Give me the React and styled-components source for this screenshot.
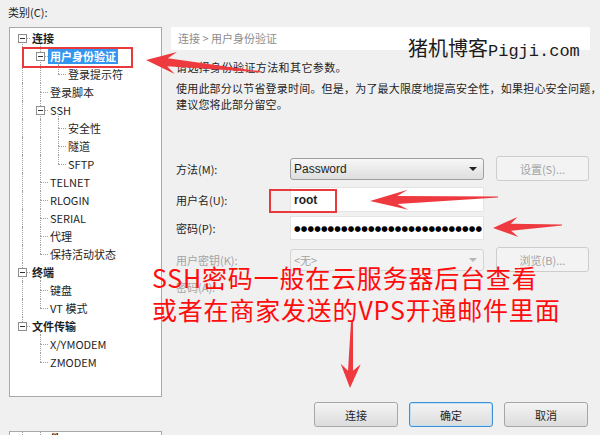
import React from 'react'
import styled, { createGlobalStyle } from 'styled-components'

const GlobalStyle = createGlobalStyle`
  html, body {
    margin: 0;
    padding: 0;
    background: #f0f0f0;
  }
  body {
    font-family: "Noto Sans CJK SC", "Liberation Sans", sans-serif;
    font-size: 11px;
    color: #1e1e1e;
  }
`

const treeRows = [
  { t: '连接', l: 0, box: true, bold: true },
  { t: '用户身份验证', l: 1, box: true, sel: true },
  { t: '登录提示符', l: 2 },
  { t: '登录脚本', l: 1 },
  { t: 'SSH', l: 1, box: true },
  { t: '安全性', l: 2 },
  { t: '隧道', l: 2 },
  { t: 'SFTP', l: 2 },
  { t: 'TELNET', l: 1 },
  { t: 'RLOGIN', l: 1 },
  { t: 'SERIAL', l: 1 },
  { t: '代理', l: 1 },
  { t: '保持活动状态', l: 1 },
  { t: '终端', l: 0, box: true, bold: true },
  { t: '键盘', l: 1 },
  { t: 'VT 模式', l: 1 },
  { t: '文件传输', l: 0, box: true, bold: true },
  { t: 'X/YMODEM', l: 1 },
  { t: 'ZMODEM', l: 1 },
]

// work out which rows still have a sibling further down
const hasNext = treeRows.map((row, i) => {
  for (let j = i + 1; j < treeRows.length; j++) {
    if (treeRows[j].l < row.l) return false
    if (treeRows[j].l === row.l) return true
  }
  return false
})

const treeLines = (() => {
  const stack = []
  return treeRows.map((row, i) => {
    stack[row.l] = i
    const guides = []
    for (let k = 0; k < row.l; k++) {
      if (hasNext[stack[k]]) guides.push(k)
    }
    return { guides, first: i === 0 }
  })
})()

const levelX = (l) => 12 + 18 * l

function hasChildren(i) {
  return i + 1 < treeRows.length && treeRows[i + 1].l > treeRows[i].l
}

const arrow = ([x1, y1], [x2, y2], headLen, headW, shaftW, tailW) => {
  const len = Math.hypot(x2 - x1, y2 - y1)
  const ux = (x2 - x1) / len
  const uy = (y2 - y1) / len
  const nx = -uy
  const ny = ux
  const jx = x2 - ux * headLen * 0.72
  const jy = y2 - uy * headLen * 0.72
  const bx = x2 - ux * headLen
  const by = y2 - uy * headLen
  const p = (x, y) => `${x.toFixed(1)},${y.toFixed(1)}`
  return [
    p(x1 + nx * tailW / 2, y1 + ny * tailW / 2),
    p(jx + nx * shaftW / 2, jy + ny * shaftW / 2),
    p(bx + nx * headW / 2, by + ny * headW / 2),
    p(x2, y2),
    p(bx - nx * headW / 2, by - ny * headW / 2),
    p(jx - nx * shaftW / 2, jy - ny * shaftW / 2),
    p(x1 - nx * tailW / 2, y1 - ny * tailW / 2),
  ].join(' ')
}

const arrows = [
  arrow([262, 72], [146, 60], 30, 22, 8, 1),
  arrow([498, 197], [370, 201], 38, 20, 8, 1),
  arrow([562, 225], [493, 228], 25, 20, 7, 1),
  arrow([352, 322], [350, 388], 24, 20, 5, 2),
]

const dots = Array.from({ length: 28 })

const App = () => {
  return (
    <Page>
      <GlobalStyle />
      <Caption>类别(C):</Caption>
      <Body>
        <LeftCol>
          <TreePanel>
            {treeRows.map((row, i) => {
              const x = levelX(row.l)
              const { guides, first } = treeLines[i]
              return (
                <TreeRow key={row.t} $level={row.l}>
                  {guides.map((k) => (
                    <VGuide key={k} $x={levelX(k)} $top={0} $bottom={0} />
                  ))}
                  {!first && <VGuide $x={x} $top={0} $bottom={9} />}
                  {hasNext[i] && <VGuide $x={x} $top={9} $bottom={0} />}
                  {row.box && hasChildren(i) && (
                    <VGuide $x={x + 18} $top={13} $bottom={0} />
                  )}
                  <HGuide $x={x} />
                  {row.box && <Expander $x={x} />}
                  <TreeText $sel={row.sel} $bold={row.bold || row.sel}>
                    {row.t}
                  </TreeText>
                </TreeRow>
              )
            })}
          </TreePanel>
          <TreeStub>
            <VGuide $x={12} $top={0} $bottom={0} />
            <VGuide $x={30} $top={0} $bottom={0} />
            <StubText>件</StubText>
          </TreeStub>
        </LeftCol>

        <Settings>
          <Crumb>连接 &gt; 用户身份验证</Crumb>
          <Intro>请选择身份验证方法和其它参数。</Intro>
          <Note>
            使用此部分以节省登录时间。但是，为了最大限度地提高安全性，如果担心安全问题，
            <br />
            建议您将此部分留空。
          </Note>

          <Form>
            <FormRow $h={25}>
              <Label>方法(M):</Label>
              <Select>
                Password
                <Caret />
              </Select>
              <Button $disabled>设置(S)...</Button>
            </FormRow>
            <FormRow $h={25} $mt={6}>
              <Label>用户名(U):</Label>
              <TextInput>
                <strong>root</strong>
              </TextInput>
            </FormRow>
            <FormRow $h={24} $mt={4}>
              <Label>密码(P):</Label>
              <TextInput>
                <Mask>
                  {dots.map((_, i) => (
                    <span key={i}>●</span>
                  ))}
                </Mask>
              </TextInput>
            </FormRow>
            <FormRow $h={25} $mt={7}>
              <Label $disabled>用户密钥(K):</Label>
              <Select $disabled>
                &lt;无&gt;
                <Caret $disabled />
              </Select>
              <Button $disabled>浏览(B)...</Button>
            </FormRow>
            <FormRow $h={20} $mt={5}>
              <Label $disabled>密码(A):</Label>
            </FormRow>
          </Form>

          <Footer>
            <Button>连接</Button>
            <Button $primary>确定</Button>
            <Button>取消</Button>
          </Footer>
        </Settings>
      </Body>

      <Watermark>
        猪机博客<Mono>Pigji.com</Mono>
      </Watermark>
      <MarkBox $x={22} $y={47} $w={111} $h={21} />
      <MarkBox $x={269} $y={189} $w={68} $h={24} />
      <RedNote>
        SSH密码一般在云服务器后台查看
        <br />
        或者在商家发送的VPS开通邮件里面
      </RedNote>
      <ArrowLayer width="600" height="435" viewBox="0 0 600 435">
        {arrows.map((pts, i) => (
          <polygon key={i} points={pts} fill="#ee3a3f" />
        ))}
      </ArrowLayer>
    </Page>
  )
}

const Page = styled.div`
  position: relative;
  width: 600px;
  height: 435px;
  overflow: hidden;
  background: #f0f0f0;
`
const Caption = styled.div`
  height: 27px;
  line-height: 24px;
  padding-left: 8px;
  color: #1e1e1e;
`
const Body = styled.div`
  display: flex;
  gap: 9px;
  padding-left: 9px;
  height: 408px;
`
const LeftCol = styled.div`
  width: 153px;
  display: flex;
  flex-direction: column;
`
const TreePanel = styled.div`
  box-sizing: border-box;
  width: 153px;
  height: 370px;
  padding-top: 1px;
  background: #fff;
  border: 1px solid #a9a9a9;
`
const TreeStub = styled.div`
  position: relative;
  box-sizing: border-box;
  margin-top: auto;
  height: 4px;
  overflow: hidden;
  background: #fff;
  border: 1px solid #a9a9a9;
  border-bottom: none;
`
const StubText = styled.span`
  position: absolute;
  left: 40px;
  top: 0;
  line-height: 12px;
  font-weight: bold;
`
const TreeRow = styled.div`
  position: relative;
  height: 18px;
  display: flex;
  align-items: center;
  padding-left: ${(p) => 22 + 18 * p.$level}px;
  white-space: nowrap;
`
const VGuide = styled.span`
  position: absolute;
  left: ${(p) => p.$x}px;
  top: ${(p) => p.$top}px;
  bottom: ${(p) => p.$bottom}px;
  border-left: 1px dotted #a0a0a0;
`
const HGuide = styled.span`
  position: absolute;
  left: ${(p) => p.$x}px;
  top: 9px;
  width: 8px;
  border-top: 1px dotted #a0a0a0;
`
const Expander = styled.span`
  position: absolute;
  left: ${(p) => p.$x - 4}px;
  top: 5px;
  box-sizing: border-box;
  width: 9px;
  height: 9px;
  background: #fff;
  border: 1px solid #8e8e8e;
  &::after {
    content: '';
    position: absolute;
    left: 1px;
    top: 3px;
    width: 5px;
    height: 1px;
    background: #333;
  }
`
const TreeText = styled.span`
  height: 16px;
  line-height: 16px;
  padding: 0 2px;
  margin-left: -2px;
  font-weight: ${(p) => (p.$bold ? 'bold' : 'normal')};
  color: ${(p) => (p.$sel ? '#fff' : '#1e1e1e')};
  background: ${(p) => (p.$sel ? '#3296f0' : 'transparent')};
`
const Settings = styled.div`
  width: 419px;
  display: flex;
  flex-direction: column;
`
const Crumb = styled.div`
  height: 23px;
  line-height: 23px;
  padding-left: 7px;
  background: #fff;
  color: #8c8c8c;
`
const Intro = styled.div`
  margin-top: 9px;
  padding-left: 5px;
  line-height: 16px;
  letter-spacing: 0.4px;
`
const Note = styled.div`
  margin-top: 5px;
  margin-right: -9px;
  padding-left: 5px;
  line-height: 16px;
  letter-spacing: 0.2px;
  white-space: nowrap;
`
const Form = styled.div`
  margin-top: 44px;
  padding-left: 5px;
`
const FormRow = styled.div`
  display: grid;
  grid-template-columns: 102px 194px 93px;
  column-gap: 12px;
  align-items: center;
  height: ${(p) => p.$h}px;
  margin-top: ${(p) => p.$mt || 0}px;
`
const Label = styled.span`
  color: ${(p) => (p.$disabled ? '#a3a3a3' : '#1e1e1e')};
`
const Select = styled.div`
  position: relative;
  box-sizing: border-box;
  height: 22px;
  line-height: 20px;
  padding-left: 3px;
  border: 1px solid ${(p) => (p.$disabled ? '#d4d4d4' : '#9f9f9f')};
  border-radius: 3px;
  color: ${(p) => (p.$disabled ? '#a3a3a3' : '#1e1e1e')};
  font-family: ${(p) => (p.$disabled ? 'inherit' : '"Liberation Sans", sans-serif')};
  font-size: ${(p) => (p.$disabled ? '11px' : '12px')};
  background: ${(p) =>
    p.$disabled ? '#f3f3f3' : 'linear-gradient(#f7f7f7, #dedede)'};
`
const Caret = styled.span`
  position: absolute;
  right: 6px;
  top: 8px;
  border-left: 4px solid transparent;
  border-right: 4px solid transparent;
  border-top: 4px solid ${(p) => (p.$disabled ? '#b5b5b5' : '#222')};
`
const TextInput = styled.div`
  box-sizing: border-box;
  height: 100%;
  display: flex;
  align-items: center;
  padding-left: 3px;
  background: #fff;
  border: 1px solid #e4e4e4;
  font-family: "Liberation Sans", sans-serif;
  font-size: 12px;
  strong {
    font-weight: 600;
  }
`
const Mask = styled.span`
  display: flex;
  justify-content: space-between;
  width: 188px;
  font-family: "DejaVu Sans", sans-serif;
  font-size: 7.5px;
  color: #000;
`
const Button = styled.button`
  box-sizing: border-box;
  width: ${(p) => (p.$disabled ? '93px' : '84px')};
  height: 25px;
  padding: 0;
  font-family: "Noto Sans CJK SC", sans-serif;
  font-size: 11px;
  color: ${(p) => (p.$disabled ? '#a3a3a3' : '#1e1e1e')};
  border: 1px solid
    ${(p) => (p.$primary ? '#3d8fd6' : p.$disabled ? '#cdcdcd' : '#a6a6a6')};
  border-radius: 3px;
  background: ${(p) =>
    p.$disabled ? '#f3f3f3' : 'linear-gradient(#f4f4f4, #dcdcdc)'};
  box-shadow: ${(p) => (p.$primary ? 'inset 0 0 0 1px #bfe0f7' : 'none')};
`
const Footer = styled.div`
  margin-top: auto;
  display: flex;
  justify-content: flex-end;
  gap: 11px;
  padding-right: 2px;
  padding-bottom: 8px;
`
const Watermark = styled.div`
  position: absolute;
  left: 408px;
  top: 35px;
  font-size: 20px;
  line-height: 26px;
  color: #1c1c1c;
  white-space: nowrap;
`
const Mono = styled.span`
  font-family: "Liberation Mono", monospace;
  font-size: 17px;
`
const MarkBox = styled.div`
  position: absolute;
  left: ${(p) => p.$x}px;
  top: ${(p) => p.$y}px;
  width: ${(p) => p.$w}px;
  height: ${(p) => p.$h}px;
  box-sizing: border-box;
  border: 2px solid #e8393c;
`
const RedNote = styled.div`
  position: absolute;
  left: 152px;
  top: 261px;
  font-size: 25px;
  line-height: 32px;
  letter-spacing: 0.8px;
  color: #ff0d0d;
  white-space: nowrap;
`
const ArrowLayer = styled.svg`
  position: absolute;
  left: 0;
  top: 0;
  pointer-events: none;
`

export default App
